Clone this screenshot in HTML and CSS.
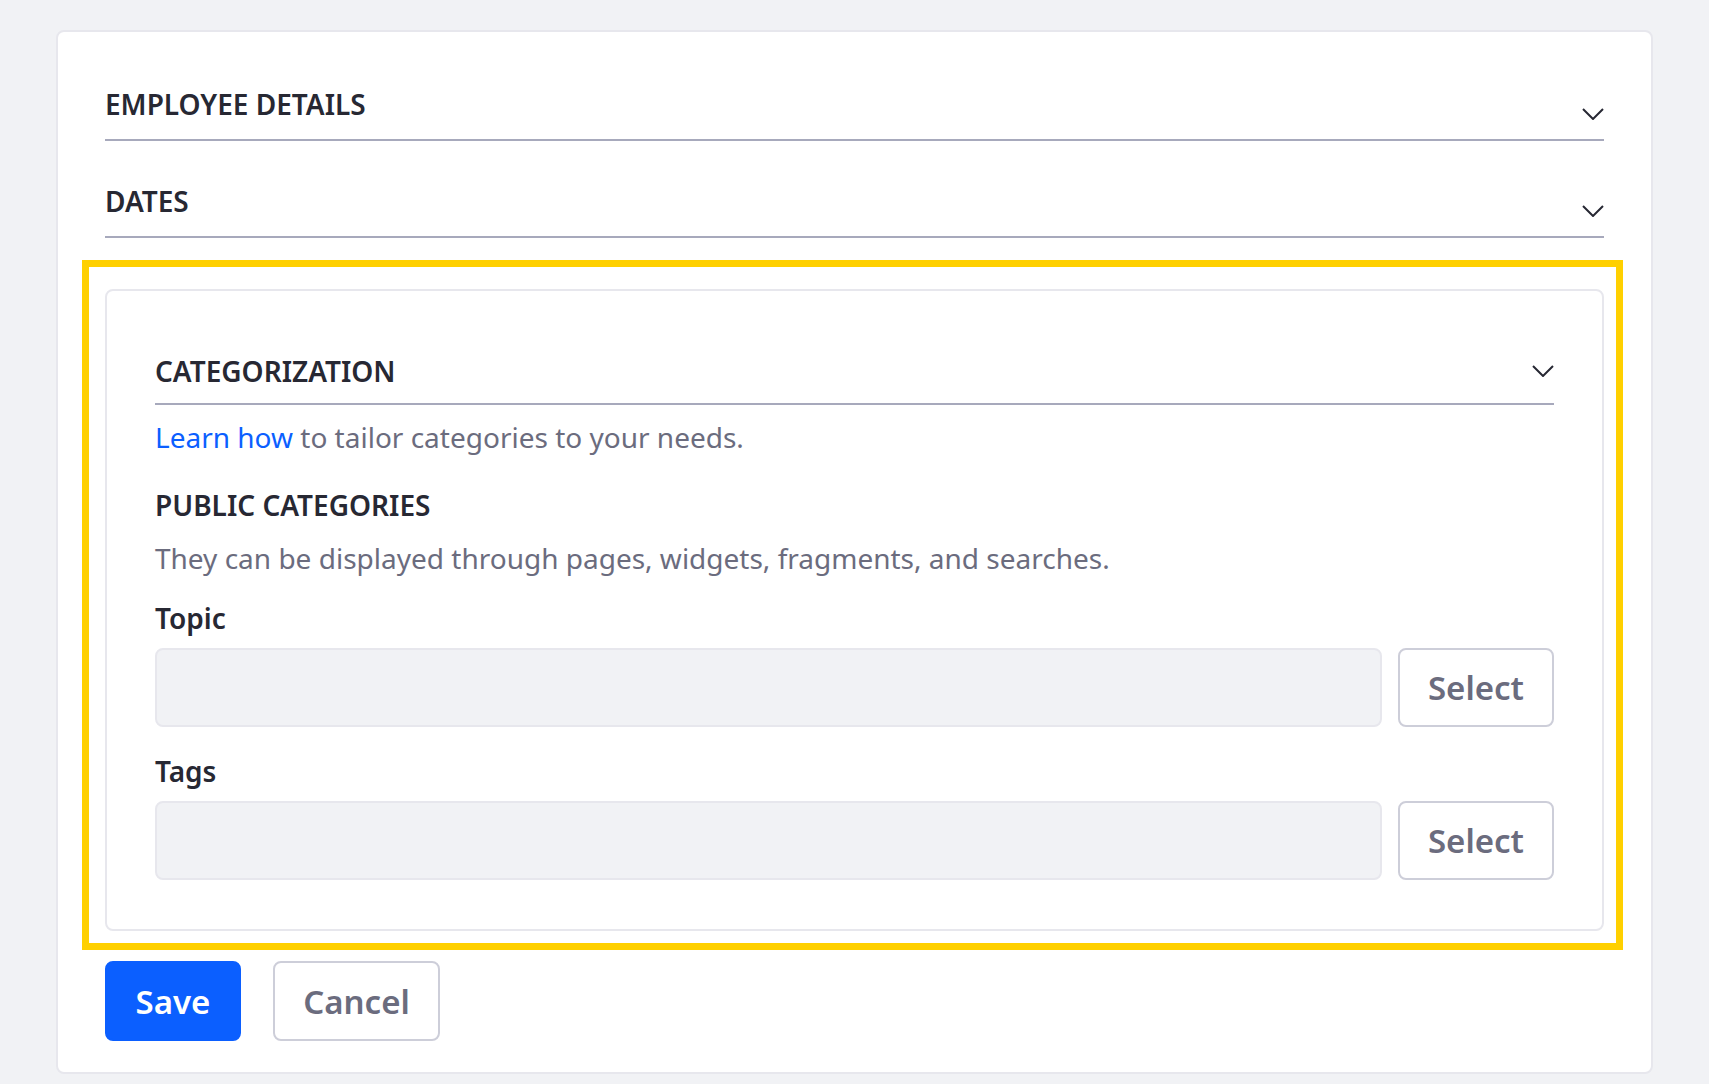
FILE: index.html
```html
<!DOCTYPE html>
<html lang="en">
<head>
<meta charset="utf-8">
<title>Employee</title>
<link rel="stylesheet" href="styles.css">
</head>
<body>
<div class="card">
  <div class="section-head">
    <span class="section-title">EMPLOYEE DETAILS</span>
    <svg class="chevron chevron-low" viewBox="0 0 22 12" width="22" height="12"><polyline points="1,1 11,11 21,1"/></svg>
  </div>
  <div class="section-head">
    <span class="section-title">DATES</span>
    <svg class="chevron chevron-low" viewBox="0 0 22 12" width="22" height="12"><polyline points="1,1 11,11 21,1"/></svg>
  </div>

  <div class="highlight">
    <div class="panel">
      <div class="section-head section-head-panel">
        <span class="section-title">CATEGORIZATION</span>
        <svg class="chevron chevron-mid" viewBox="0 0 22 12" width="22" height="12"><polyline points="1,1 11,11 21,1"/></svg>
      </div>
      <p class="help"><a class="link" href="#">Learn how</a> to tailor categories to your needs.</p>
      <h3 class="subhead">PUBLIC CATEGORIES</h3>
      <p class="desc">They can be displayed through pages, widgets, fragments, and searches.</p>
      <label class="field-label">Topic</label>
      <div class="field-row">
        <div class="field-input"></div>
        <button class="btn-secondary" type="button">Select</button>
      </div>
      <label class="field-label field-label-second">Tags</label>
      <div class="field-row">
        <div class="field-input"></div>
        <button class="btn-secondary" type="button">Select</button>
      </div>
    </div>
  </div>

  <div class="actions">
    <button class="btn-primary" type="button">Save</button>
    <button class="btn-outline" type="button">Cancel</button>
  </div>
</div>
</body>
</html>
```
FILE: styles.css
```css
* { box-sizing: border-box; }

html, body {
  margin: 0;
  padding: 0;
  background: #f1f2f5;
  font-family: "Noto Sans", "Open Sans", sans-serif;
  color: #272833;
}

body {
  padding-top: 30px;
  height: 1084px;
  overflow: hidden;
}

.card {
  width: 1597px;
  margin-left: 56px;
  background: #fff;
  border: 2px solid #e7e7ed;
  border-radius: 8px;
  padding: 12px 47px 31px 47px;
}

.section-head {
  display: flex;
  justify-content: space-between;
  align-items: flex-start;
  padding-top: 41px;
  padding-bottom: 16px;
  border-bottom: 2px solid #a7a9bc;
}

.section-title {
  font-size: 28px;
  line-height: 38px;
  font-weight: 600;
  color: #272833;
}

.chevron {
  flex: none;
  fill: none;
  stroke: #272833;
  stroke-width: 2;
}
.chevron-low { margin-top: 23px; }
.chevron-mid { margin-top: 13px; }

.highlight {
  margin: 22px -19px 0 -23px;
  border: 7px solid #ffd000;
  padding: 22px 12px 12px 16px;
}

.panel {
  border: 2px solid #e7e7ed;
  border-radius: 8px;
  padding: 20px 48px 49px 48px;
}

.section-head-panel {
  padding-bottom: 13px;
}

.help {
  margin: 13px 0 0 0;
  font-size: 28px;
  line-height: 38px;
  color: #6b6c7e;
}

.link {
  color: #0b5fff;
  text-decoration: none;
}

.subhead {
  margin: 30px 0 0 0;
  font-size: 28px;
  line-height: 38px;
  font-weight: 600;
  color: #272833;
}

.desc {
  margin: 15px 0 0 0;
  font-size: 28px;
  line-height: 38px;
  color: #6b6c7e;
}

.field-label {
  display: block;
  margin-top: 22px;
  font-size: 28px;
  line-height: 38px;
  font-weight: 600;
  color: #272833;
}
.field-label-second { margin-top: 25px; }

.field-row {
  display: flex;
  gap: 16px;
  margin-top: 11px;
}

.field-input {
  flex: 1;
  height: 79px;
  background: #f1f2f5;
  border: 2px solid #e7e7ed;
  border-radius: 8px;
}

.btn-secondary,
.btn-outline {
  font-family: "Noto Sans", "Open Sans", sans-serif;
  font-size: 33px;
  font-weight: 600;
  color: #6b6c7e;
  background: #fff;
  border: 2px solid #cdced9;
  border-radius: 8px;
  padding: 0;
  height: 79px;
}

.btn-secondary { width: 156px; }

.actions {
  display: flex;
  gap: 32px;
  margin-top: 11px;
}

.btn-primary {
  font-family: "Noto Sans", "Open Sans", sans-serif;
  font-size: 33px;
  font-weight: 600;
  color: #fff;
  background: #0b5fff;
  border: 2px solid #0b5fff;
  border-radius: 8px;
  width: 136px;
  height: 80px;
  padding: 0;
}

.btn-outline { width: 167px; height: 80px; }
```
